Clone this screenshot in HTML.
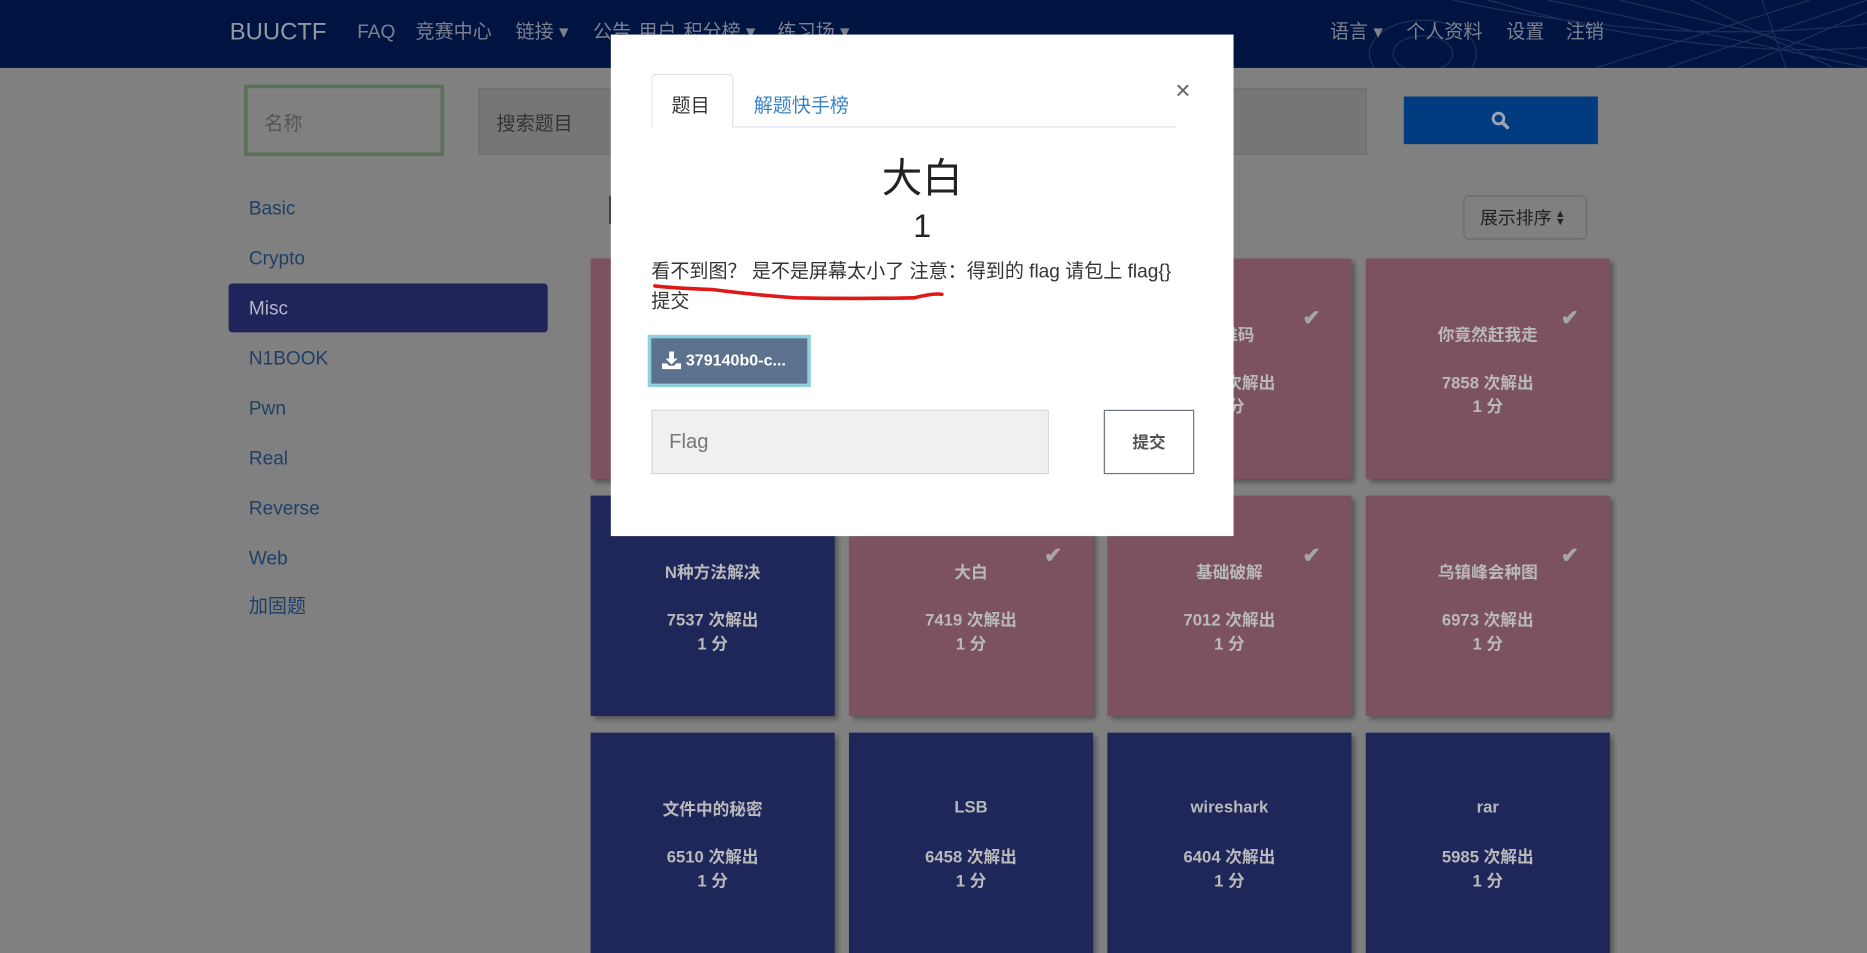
<!DOCTYPE html>
<html><head><meta charset="utf-8"><style>
html,body{margin:0;padding:0;width:1867px;height:878px;overflow:hidden;background:#808080;}
#w{position:absolute;left:0;top:0;width:1568px;height:737px;transform:scale(1.19069,1.19132);transform-origin:0 0;font-family:"Liberation Sans","Noto Sans CJK SC",sans-serif;}
.a{position:absolute;}
.nav{left:0;top:0;width:1568px;height:57px;background:#001442;overflow:hidden}
.ni{position:absolute;top:16px;height:24px;line-height:24px;font-size:16px;color:#7b8190;white-space:nowrap}
.side{font-size:16px;color:#1f3f66;left:209px;line-height:20px}
.card{position:absolute;width:205px;height:185px;box-shadow:3px 3px 4px rgba(0,0,0,.35);color:#b9b9b9;font-weight:bold;text-align:center;font-size:14px}
.pk{background:#7d5260}.bl{background:#1f275a}
.card .t{position:absolute;left:0;right:0;top:54px}
.card .c{position:absolute;left:0;right:0;top:94px;line-height:20px}
.card .k{position:absolute;right:26px;top:40px;font-size:18px;color:#a5a5a5}
</style></head><body><div id="w">
<div class="a nav">
<svg class="a" style="left:1100px;top:0" width="468" height="57"><g fill="none" stroke="#2a3c66" stroke-width="1" opacity=".7"><ellipse cx="95" cy="45" rx="45" ry="28"/><ellipse cx="95" cy="45" rx="25" ry="15"/><path d="M120 0 Q300 40 468 20M150 0 Q320 50 468 40M200 0 L468 57M260 0 L468 50M320 0L440 57M380 0L400 57M300 57L468 0M360 57L468 10M240 57L420 0"/></g></svg>
<div class="ni" style="left:193px;top:15px;font-size:20px;color:#9298a3">BUUCTF</div>
<div class="ni" style="left:300px">FAQ</div>
<div class="ni" style="left:349px">竞赛中心</div>
<div class="ni" style="left:433px">链接 ▾</div>
<div class="ni" style="left:498px">公告</div>
<div class="ni" style="left:536px">用户</div>
<div class="ni" style="left:574px">积分榜 ▾</div>
<div class="ni" style="left:653px">练习场 ▾</div>
<div class="ni" style="left:1117px">语言 ▾</div>
<div class="ni" style="left:1181px">个人资料</div>
<div class="ni" style="left:1265px">设置</div>
<div class="ni" style="left:1315px">注销</div>
</div>
<div class="a" style="left:205px;top:71px;width:162px;height:54px;border:3px solid #577255;background:#808080"></div>
<div class="a" style="left:222px;top:90px;font-size:16px;color:#555">名称</div>
<div class="a" style="left:402px;top:74px;width:744px;height:54px;border:1px solid #6e6e6e;background:#767676"></div>
<div class="a" style="left:417px;top:90px;font-size:16px;color:#333">搜索题目</div>
<div class="a" style="left:1179px;top:81px;width:163px;height:40px;background:#003c7f"></div>
<svg class="a" style="left:1252px;top:93px" width="16" height="16"><circle cx="6.5" cy="6.5" r="4.5" fill="none" stroke="#9aa5b8" stroke-width="2.4"/><path d="M10 10L14 14" stroke="#9aa5b8" stroke-width="3" stroke-linecap="round"/></svg>
<div class="a side" style="top:166px">Basic</div>
<div class="a side" style="top:208px">Crypto</div>
<div class="a" style="left:192px;top:238px;width:268px;height:41px;background:#1f255a;border-radius:3px"></div>
<div class="a side" style="top:250px;color:#b4b8c8">Misc</div>
<div class="a side" style="top:292px">N1BOOK</div>
<div class="a side" style="top:334px">Pwn</div>
<div class="a side" style="top:376px">Real</div>
<div class="a side" style="top:418px">Reverse</div>
<div class="a side" style="top:460px">Web</div>
<div class="a side" style="top:500px">加固题</div>
<div class="a" style="left:509px;top:158px;font-size:34px;color:#222">Misc</div>
<div class="a" style="left:1229px;top:164px;width:104px;height:37px;border:1px solid #6a6a6a;border-radius:4px;background:#808080;font-size:15px;color:#222;line-height:37px;padding-left:13px;box-sizing:border-box;overflow:hidden;white-space:nowrap">展示排序</div>
<div class="a" style="left:1306px;top:176px;font-size:9px;line-height:7px;color:#222">▲<br>▼</div>

<div class="card pk" style="left:496px;top:217px"><div class="t">题目</div><div class="c">8000 次解出<br>1 分</div></div>
<div class="card pk" style="left:713px;top:217px"><div class="t">题目</div><div class="c">8000 次解出<br>1 分</div></div>
<div class="card pk" style="left:930px;top:217px"><div class="k">✔</div><div class="t">二维码</div><div class="c">8000 次解出<br>1 分</div></div>
<div class="card pk" style="left:1147px;top:217px"><div class="k">✔</div><div class="t">你竟然赶我走</div><div class="c">7858 次解出<br>1 分</div></div>
<div class="card bl" style="left:496px;top:416px"><div class="t">N种方法解决</div><div class="c">7537 次解出<br>1 分</div></div>
<div class="card pk" style="left:713px;top:416px"><div class="k">✔</div><div class="t">大白</div><div class="c">7419 次解出<br>1 分</div></div>
<div class="card pk" style="left:930px;top:416px"><div class="k">✔</div><div class="t">基础破解</div><div class="c">7012 次解出<br>1 分</div></div>
<div class="card pk" style="left:1147px;top:416px"><div class="k">✔</div><div class="t">乌镇峰会种图</div><div class="c">6973 次解出<br>1 分</div></div>
<div class="card bl" style="left:496px;top:615px"><div class="t">文件中的秘密</div><div class="c">6510 次解出<br>1 分</div></div>
<div class="card bl" style="left:713px;top:615px"><div class="t">LSB</div><div class="c">6458 次解出<br>1 分</div></div>
<div class="card bl" style="left:930px;top:615px"><div class="t">wireshark</div><div class="c">6404 次解出<br>1 分</div></div>
<div class="card bl" style="left:1147px;top:615px"><div class="t">rar</div><div class="c">5985 次解出<br>1 分</div></div>

<div class="a" style="left:513px;top:29px;width:523px;height:421px;background:#fff"></div>
<div class="a" style="left:547px;top:106px;width:441px;height:1px;background:#dde0e6"></div>
<div class="a" style="left:547px;top:62px;width:69px;height:45px;border:1px solid #dde0e6;border-bottom:none;border-radius:4px 4px 0 0;background:#fff;box-sizing:border-box"></div>
<div class="a" style="left:564px;top:75px;font-size:16px;color:#333">题目</div>
<div class="a" style="left:633px;top:75px;font-size:16px;color:#3a84c4">解题快手榜</div>
<div class="a" style="left:987px;top:63px;font-size:22px;color:#666">×</div>
<div class="a" style="left:513px;width:523px;top:122px;text-align:center;font-size:34px;color:#222">大白</div>
<div class="a" style="left:513px;width:523px;top:175px;text-align:center;font-size:27px;color:#222">1</div>
<div class="a" style="left:547px;top:216px;width:455px;font-size:16px;line-height:25px;color:#333">看不到图？ 是不是屏幕太小了 注意：得到的 flag 请包上 flag{} 提交</div>
<svg class="a" style="left:548px;top:228px" width="250" height="28"><path d="M2 12 Q20 14 50 15 Q90 20 120 22 Q170 23 220 22 Q235 18 243 19" fill="none" stroke="#e01818" stroke-width="3" stroke-linecap="round"/></svg>
<div class="a" style="left:544px;top:281px;width:137px;height:44px;background:#8fd0dc"></div>
<div class="a" style="left:547px;top:284px;width:131px;height:38px;background:#5b718e;color:#fff;font-weight:bold;font-size:13.5px;line-height:38px;white-space:nowrap;overflow:hidden">
<svg class="a" style="left:9px;top:11px" width="16" height="15"><path d="M6 0h4v6h3l-5 5-5-5h3z" fill="#fff"/><path d="M0 10h4l2 2h4l2-2h4v5H0z" fill="#fff"/></svg>
<span class="a" style="left:29px;top:0">379140b0-c...</span></div>
<div class="a" style="left:547px;top:344px;width:334px;height:54px;background:#f0f0f0;border:1px solid #d6d8dc;box-sizing:border-box"></div>
<div class="a" style="left:562px;top:361px;font-size:17px;color:#777">Flag</div>
<div class="a" style="left:927px;top:344px;width:76px;height:54px;border:1px solid #6b7480;box-sizing:border-box;text-align:center;line-height:52px;font-weight:bold;font-size:14px;color:#555">提交</div>
</div></body></html>
